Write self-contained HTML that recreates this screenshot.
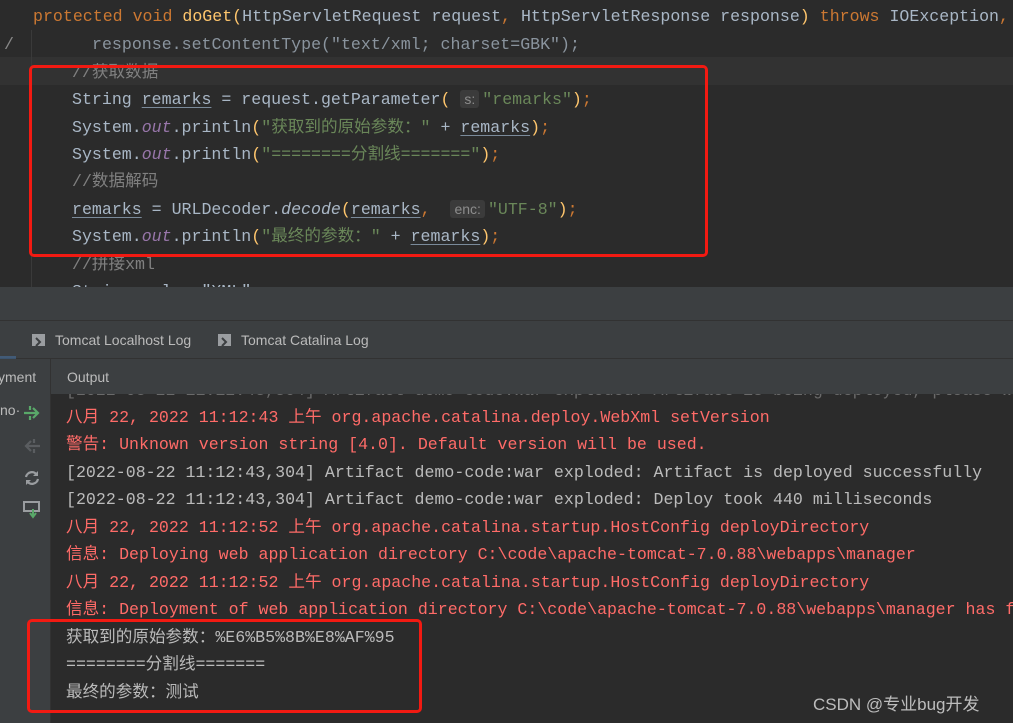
<!DOCTYPE html>
<html><head><meta charset="utf-8"><style>
*{margin:0;padding:0;box-sizing:border-box}
body{width:1013px;height:723px;overflow:hidden;background:#2b2b2b;position:relative;font-family:"Liberation Mono","Noto Sans CJK SC",monospace;font-size:16.6px;color:#a9b7c6}
.l{position:absolute;white-space:pre;line-height:27px;height:27px}
.k{color:#cc7832}.m{color:#ffc66d}.s{color:#6a8759}.c{color:#808080}.o{color:#9876aa;font-style:italic}.i{font-style:italic}
.u{text-decoration:underline;text-decoration-color:#7a8a9a;text-underline-offset:3px}
.h{background:#3b3b3b;color:#8c8c8c;border-radius:3px;font-family:"Liberation Sans",sans-serif;font-size:14px;padding:1px 4px;margin-right:3px}
.r{color:#ff6b68}
.sans{font-family:"Liberation Sans","Noto Sans CJK SC",sans-serif;font-size:14px;color:#bbbbbb}
.box{position:absolute;border:3px solid #f21a12;border-radius:5px}
#con{position:absolute;left:51px;top:394px;width:962px;height:329px;background:#2b2b2b;overflow:hidden}
#con .l{left:15px}
</style></head><body>
<div style="position:absolute;left:0;top:57px;width:1013px;height:28px;background:#323232"></div>
<div style="position:absolute;left:31px;top:30px;width:1px;height:257px;background:#3a3a3a"></div>
<div class="l" style="left:4px;top:31px;color:#888">/</div>
<div style="position:absolute;left:0;top:0;width:1013px;height:287px;overflow:hidden">
<div class="l" style="left:33px;top:3px"><span class="k">protected void </span><span class="m">doGet</span><span class="m">(</span>HttpServletRequest request<span class="k">, </span>HttpServletResponse response<span class="m">)</span> <span class="k">throws </span>IOException<span class="k">,</span></div>
<div class="l" style="left:92px;top:31px;color:#8a949e">response.setContentType("text/xml; charset=GBK");</div>
<div class="l c" style="left:72px;top:59px">//获取数据</div>
<div class="l" style="left:72px;top:86px">String <span class="u">remarks</span> = request.getParameter<span class="m">(</span> <span class="h">s:</span><span class="s">"remarks"</span><span class="m">)</span><span class="k">;</span></div>
<div class="l" style="left:72px;top:114px">System.<span class="o">out</span>.println<span class="m">(</span><span class="s">"获取到的原始参数："</span> + <span class="u">remarks</span><span class="m">)</span><span class="k">;</span></div>
<div class="l" style="left:72px;top:141px">System.<span class="o">out</span>.println<span class="m">(</span><span class="s">"========分割线======="</span><span class="m">)</span><span class="k">;</span></div>
<div class="l c" style="left:72px;top:168px">//数据解码</div>
<div class="l" style="left:72px;top:196px"><span class="u">remarks</span> = URLDecoder.<span class="i">decode</span><span class="m">(</span><span class="u">remarks</span><span class="k">,</span>  <span class="h">enc:</span><span class="s">"UTF-8"</span><span class="m">)</span><span class="k">;</span></div>
<div class="l" style="left:72px;top:223px">System.<span class="o">out</span>.println<span class="m">(</span><span class="s">"最终的参数："</span> + <span class="u">remarks</span><span class="m">)</span><span class="k">;</span></div>
<div class="l c" style="left:72px;top:251px">//拼接xml</div>
<div class="l" style="left:72px;top:278px">String xml = "XML"</div>
</div>
<div class="box" style="left:29px;top:65px;width:679px;height:192px"></div>

<div style="position:absolute;left:0;top:287px;width:1013px;height:436px;background:#3c3f41"></div>
<div style="position:absolute;left:0;top:320px;width:1013px;height:1px;background:#323232"></div>
<div style="position:absolute;left:0;top:358px;width:1013px;height:1px;background:#323232"></div>
<div style="position:absolute;left:0;top:356px;width:16px;height:3px;background:#4a88c7;opacity:.4"></div>
<div style="position:absolute;left:32px;top:334px;width:13px;height:12px;background:#9a9da0"><svg width="13" height="12"><path d="M4 2l4 4-4 4" stroke="#3c3f41" stroke-width="2" fill="none"/></svg></div>
<div class="sans" style="position:absolute;left:55px;top:332px">Tomcat Localhost Log</div>
<div style="position:absolute;left:218px;top:334px;width:13px;height:12px;background:#9a9da0"><svg width="13" height="12"><path d="M4 2l4 4-4 4" stroke="#3c3f41" stroke-width="2" fill="none"/></svg></div>
<div class="sans" style="position:absolute;left:241px;top:332px">Tomcat Catalina Log</div>
<div class="sans" style="position:absolute;left:-2px;top:369px">yment</div>
<div style="position:absolute;left:50px;top:359px;width:1px;height:364px;background:#323232"></div>
<div class="sans" style="position:absolute;left:67px;top:369px">Output</div>
<div class="sans" style="position:absolute;left:0;top:402px">no·</div>
<svg style="position:absolute;left:22px;top:403px" width="20" height="20"><path d="M2 10h14M11 5l5 5-5 5M8 3v4M8 13v4" stroke="#59a869" stroke-width="2.2" fill="none"/></svg>
<svg style="position:absolute;left:22px;top:436px" width="20" height="20"><path d="M4 10h14M9 5l-5 5 5 5M12 3v4M12 13v4" stroke="#5a5d60" stroke-width="2.2" fill="none"/></svg>
<svg style="position:absolute;left:23px;top:469px" width="18" height="18"><path d="M3 8a6 6 0 0 1 11-2M15 10a6 6 0 0 1-11 2" stroke="#9a9da0" stroke-width="2.2" fill="none"/><path d="M15 2v5h-5M3 16v-5h5" fill="#9a9da0"/></svg>
<svg style="position:absolute;left:23px;top:500px" width="18" height="20"><rect x="1" y="2" width="15" height="9" fill="none" stroke="#9a9da0" stroke-width="2"/><path d="M10 9v7M7 13l3 4 3-4" stroke="#59a869" stroke-width="2" fill="none"/></svg>

<div id="con">
<div class="l" style="top:-17px;color:#6a6a6a">[2022-08-22 11:12:43,304] Artifact demo-code:war exploded: Artifact is being deployed, please wait...</div>
<div class="l r" style="top:10px">八月 22, 2022 11:12:43 上午 org.apache.catalina.deploy.WebXml setVersion</div>
<div class="l r" style="top:37px">警告: Unknown version string [4.0]. Default version will be used.</div>
<div class="l" style="top:65px;color:#bbbbbb">[2022-08-22 11:12:43,304] Artifact demo-code:war exploded: Artifact is deployed successfully</div>
<div class="l" style="top:92px;color:#bbbbbb">[2022-08-22 11:12:43,304] Artifact demo-code:war exploded: Deploy took 440 milliseconds</div>
<div class="l r" style="top:120px">八月 22, 2022 11:12:52 上午 org.apache.catalina.startup.HostConfig deployDirectory</div>
<div class="l r" style="top:147px">信息: Deploying web application directory C:\code\apache-tomcat-7.0.88\webapps\manager</div>
<div class="l r" style="top:175px">八月 22, 2022 11:12:52 上午 org.apache.catalina.startup.HostConfig deployDirectory</div>
<div class="l r" style="top:202px">信息: Deployment of web application directory C:\code\apache-tomcat-7.0.88\webapps\manager has finished</div>
<div class="l" style="top:230px;color:#bbbbbb">获取到的原始参数：%E6%B5%8B%E8%AF%95</div>
<div class="l" style="top:257px;color:#bbbbbb">========分割线=======</div>
<div class="l" style="top:285px;color:#bbbbbb">最终的参数：测试</div>
</div>
<div class="box" style="left:27px;top:619px;width:395px;height:94px"></div>
<div style="position:absolute;left:813px;top:690px;font-family:'Liberation Sans','Noto Sans CJK SC',sans-serif;font-size:17px;color:#bdbdbd">CSDN @专业bug开发</div>
</body></html>
